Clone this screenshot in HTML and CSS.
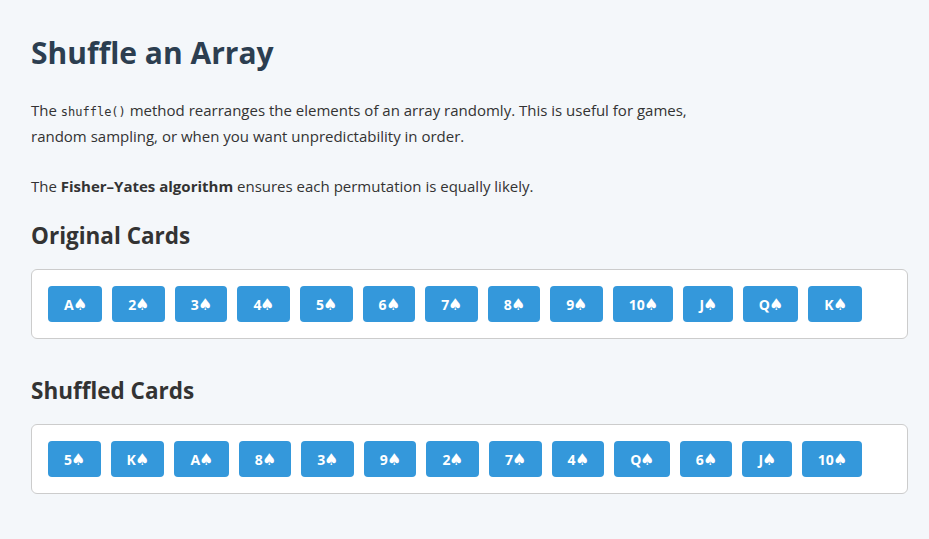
FILE: index.html
```html
<!DOCTYPE html>
<html lang="en">
<head>
<meta charset="utf-8">
<title>Shuffle an Array</title>
<link rel="stylesheet" href="styles.css">
</head>
<body>
<main class="page">
  <h1 class="title">Shuffle an Array</h1>
  <p class="text">The <code class="code">shuffle()</code> method rearranges the elements of an array randomly. This is useful for games,<br>random sampling, or when you want unpredictability in order.</p>
  <p class="text text-second">The <strong>Fisher–Yates algorithm</strong> ensures each permutation is equally likely.</p>

  <h2 class="section-title">Original Cards</h2>
  <div class="deck">
    <span class="card">A<span class="suit">♠</span></span>
    <span class="card">2<span class="suit">♠</span></span>
    <span class="card">3<span class="suit">♠</span></span>
    <span class="card">4<span class="suit">♠</span></span>
    <span class="card">5<span class="suit">♠</span></span>
    <span class="card">6<span class="suit">♠</span></span>
    <span class="card">7<span class="suit">♠</span></span>
    <span class="card">8<span class="suit">♠</span></span>
    <span class="card">9<span class="suit">♠</span></span>
    <span class="card">10<span class="suit">♠</span></span>
    <span class="card">J<span class="suit">♠</span></span>
    <span class="card">Q<span class="suit">♠</span></span>
    <span class="card">K<span class="suit">♠</span></span>
  </div>

  <h2 class="section-title section-second">Shuffled Cards</h2>
  <div class="deck">
    <span class="card">5<span class="suit">♠</span></span>
    <span class="card">K<span class="suit">♠</span></span>
    <span class="card">A<span class="suit">♠</span></span>
    <span class="card">8<span class="suit">♠</span></span>
    <span class="card">3<span class="suit">♠</span></span>
    <span class="card">9<span class="suit">♠</span></span>
    <span class="card">2<span class="suit">♠</span></span>
    <span class="card">7<span class="suit">♠</span></span>
    <span class="card">4<span class="suit">♠</span></span>
    <span class="card">Q<span class="suit">♠</span></span>
    <span class="card">6<span class="suit">♠</span></span>
    <span class="card">J<span class="suit">♠</span></span>
    <span class="card">10<span class="suit">♠</span></span>
  </div>
</main>
</body>
</html>
```

FILE: styles.css
```css
html, body {
  margin: 0;
  padding: 0;
  background: #f4f7fa;
}

body {
  font-family: "Open Sans", "Noto Sans", sans-serif;
  color: #333333;
}

.page {
  padding: 33px 21px 40px 31px;
}

.title {
  margin: 0;
  font-size: 30px;
  line-height: 40px;
  font-weight: 700;
  color: #2c3e50;
}

.text {
  margin: 25px 0 0;
  font-size: 15px;
  line-height: 24px;
}

.text-second {
  margin-top: 26px;
}

.code {
  font-family: "DejaVu Sans Mono", "Liberation Mono", monospace;
  font-size: 12px;
}

.section-title {
  margin: 22px 0 0;
  font-size: 22.5px;
  line-height: 32px;
  font-weight: 700;
  color: #333333;
}

.section-second {
  margin-top: 36px;
}

.deck {
  margin-top: 17px;
  display: flex;
  flex-wrap: wrap;
  gap: 10px;
  padding: 16px;
  background: #ffffff;
  border: 1px solid #cccccc;
  border-radius: 6px;
}

.card {
  display: inline-flex;
  align-items: center;
  justify-content: center;
  height: 36px;
  padding: 0 16px;
  box-sizing: border-box;
  background: #3498db;
  color: #ffffff;
  font-size: 14px;
  font-weight: 700;
  border-radius: 4px;
}

.suit {
  display: inline-block;
  font-family: "DejaVu Sans", sans-serif;
  font-size: 14px;
  font-weight: 400;
  line-height: 1;
  transform: scale(1.15);
}
```
